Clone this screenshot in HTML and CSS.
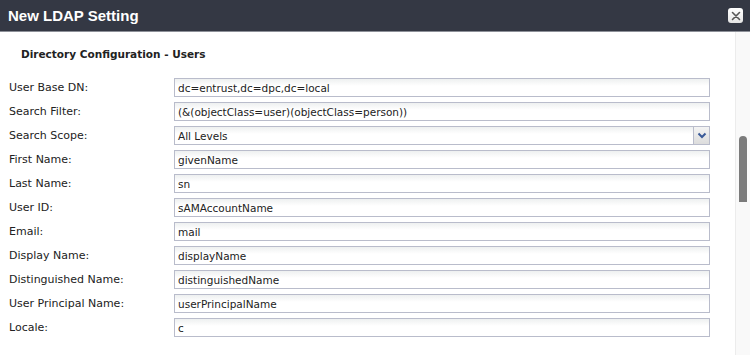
FILE: index.html
```html
<!DOCTYPE html>
<html lang="en">
<head>
  <meta charset="UTF-8">
  <title>New LDAP Setting</title>
  <link rel="stylesheet" href="styles.css">
</head>
<body>
  <div class="dialog">
    <header class="dialog-head">
      <h1>New LDAP Setting</h1>
      <button class="close-btn" aria-label="Close">
        <svg width="10" height="10" viewBox="0 0 10 10"><path d="M1.5 1.5l7 7M8.5 1.5l-7 7" stroke="#555" stroke-width="1.6" stroke-linecap="round"/></svg>
      </button>
    </header>

    <div class="dialog-body">
      <section class="form-pane">
        <h2>Directory Configuration - Users</h2>
        <div class="form-grid">
          <label>User Base DN:</label>
          <input type="text" value="dc=entrust,dc=dpc,dc=local">
          <label>Search Filter:</label>
          <input type="text" value="(&amp;(objectClass=user)(objectClass=person))">
          <label>Search Scope:</label>
          <div class="select">
            <span>All Levels</span>
            <span class="select-btn">
              <svg width="10" height="7" viewBox="0 0 10 7"><path d="M1.5 1.5l3.5 3.5 3.5-3.5" fill="none" stroke="#3a5a98" stroke-width="2"/></svg>
            </span>
          </div>
          <label>First Name:</label>
          <input type="text" value="givenName">
          <label>Last Name:</label>
          <input type="text" value="sn">
          <label>User ID:</label>
          <input type="text" value="sAMAccountName">
          <label>Email:</label>
          <input type="text" value="mail">
          <label>Display Name:</label>
          <input type="text" value="displayName">
          <label>Distinguished Name:</label>
          <input type="text" value="distinguishedName">
          <label>User Principal Name:</label>
          <input type="text" value="userPrincipalName">
          <label>Locale:</label>
          <input type="text" value="c">
        </div>
      </section>
      <aside class="scrollbar"><div class="thumb"></div></aside>
    </div>
  </div>
</body>
</html>
```

FILE: styles.css
```css
* { box-sizing: border-box; margin: 0; padding: 0; }
html, body { height: 100%; }
body { font-family: "DejaVu Sans", Verdana, sans-serif; font-size: 11px; color: #222; background: #fff; overflow: hidden; }
.dialog { display: flex; flex-direction: column; height: 100%; }
.dialog-head { height: 32px; background: #343844; border-bottom: 1px solid #8d9098; display: flex; align-items: center; justify-content: space-between; padding: 0 7px 0 8px; }
.dialog-head h1 { font-family: "Liberation Sans", Arial, sans-serif; font-size: 15px; font-weight: bold; color: #fff; }
.close-btn { width: 15px; height: 15px; border: none; border-radius: 3px; background: linear-gradient(#fff, #e4e4e4); display: flex; align-items: center; justify-content: center; }
.dialog-body { flex: 1; display: flex; }
.form-pane { flex: 1; padding: 14px 25px 0 9px; }
.form-pane h2 { font-size: 10.5px; font-weight: bold; color: #222; padding-left: 12px; height: 16px; line-height: 16px; margin-bottom: 16px; }
.form-grid { display: grid; grid-template-columns: 165px 536px; row-gap: 5px; align-items: center; }
.form-grid label { line-height: 19px; }
.form-grid input, .select { height: 19px; border: 1px solid #b9bccb; background: linear-gradient(#eef0f0, #fff 7px); font: inherit; font-size: 10.5px; color: #222; padding: 0 3px; }
.select { display: flex; align-items: center; justify-content: space-between; padding-right: 0; }
.select-btn { width: 16px; height: 17px; border-left: 1px solid #b9bccb; background: linear-gradient(#f4f4f4, #dcdcdc); display: flex; align-items: center; justify-content: center; }
.scrollbar { width: 15px; background: #f9f9f9; border-left: 1px solid #ececec; padding: 104px 3px 0 3px; }
.thumb { height: 66px; border-radius: 4px 4px 0 0; background: #7b7b7b; }
```
